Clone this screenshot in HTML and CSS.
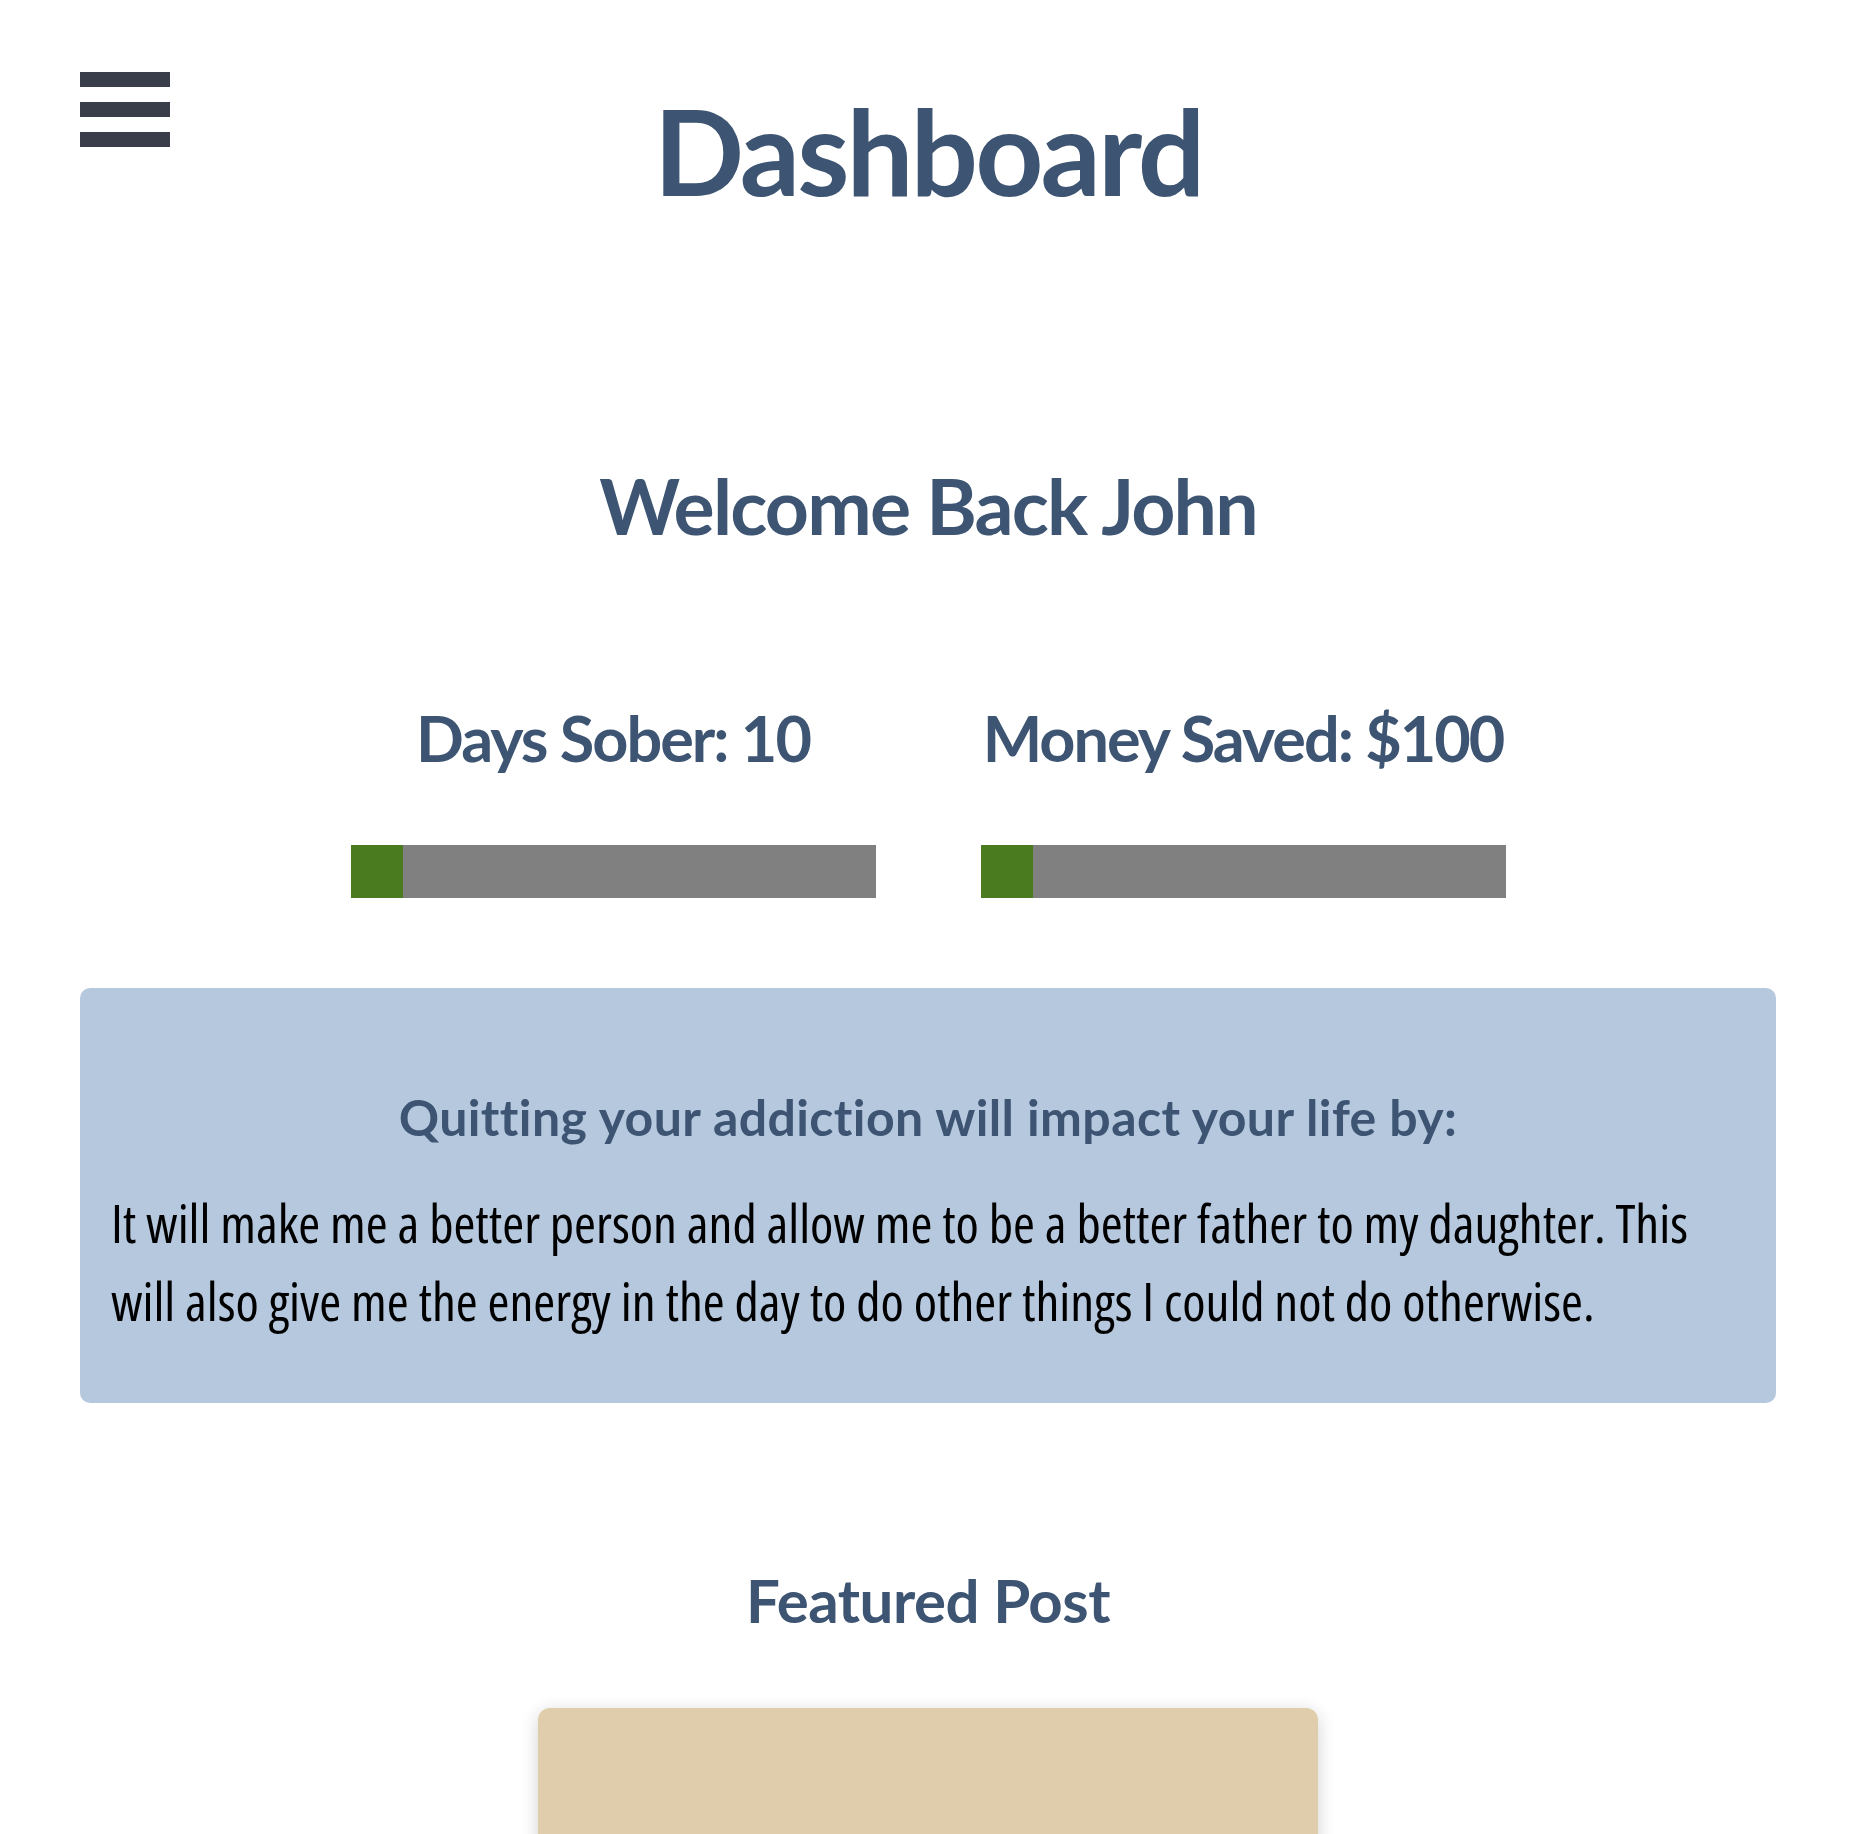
FILE: index.html
```html
<!DOCTYPE html>
<html lang="en">
<head>
<meta charset="utf-8">
<title>Dashboard</title>
<link rel="stylesheet" href="styles.css">
</head>
<body>
<div class="page">
  <header class="header">
    <button class="burger" aria-label="Menu">
      <span class="burger-bar"></span>
      <span class="burger-bar"></span>
      <span class="burger-bar"></span>
    </button>
    <h1 class="title">Dashboard</h1>
    <div class="header-spacer"></div>
  </header>

  <h2 class="welcome">Welcome Back John</h2>

  <section class="stats">
    <div class="stat">
      <h3 class="stat-label">Days Sober: 10</h3>
      <div class="progress"><div class="progress-fill" style="width:10%"></div></div>
    </div>
    <div class="stat">
      <h3 class="stat-label">Money Saved: $100</h3>
      <div class="progress"><div class="progress-fill" style="width:10%"></div></div>
    </div>
  </section>

  <section class="impact">
    <h3 class="impact-title">Quitting your addiction will impact your life by:</h3>
    <p class="impact-text">It will make me a better person and allow me to be a better father to my daughter. This will also give me the energy in the day to do other things I could not do otherwise.</p>
  </section>

  <h3 class="featured-title">Featured Post</h3>
  <div class="featured-card"></div>
</div>
</body>
</html>
```

FILE: styles.css
```css
html, body {
  margin: 0;
  padding: 0;
  background: #ffffff;
}

body {
  font-family: "Lato", "Open Sans", "Liberation Sans", sans-serif;
  color: #000000;
}

.page {
  padding: 0 74px 0 80px;
  overflow: hidden;
  height: 1834px;
  box-sizing: border-box;
}

.header {
  display: grid;
  grid-template-columns: 1fr auto 1fr;
  align-items: start;
  padding-top: 72px;
}

.burger {
  display: flex;
  flex-direction: column;
  gap: 15px;
  width: 90px;
  padding: 0;
  margin: 0;
  border: 0;
  background: transparent;
  cursor: pointer;
}

.burger-bar {
  display: block;
  width: 90px;
  height: 15px;
  background: #3a3d4a;
}

.title {
  margin: 19px 0 0;
  font-size: 119px;
  line-height: 1;
  font-weight: 700;
  color: #3d5572;
  letter-spacing: -3px;
  text-align: center;
}

.welcome {
  margin: 257px 0 0;
  font-size: 77px;
  line-height: 1;
  font-weight: 700;
  color: #3d5572;
  text-align: center;
  letter-spacing: -1.8px;
}

.stats {
  display: flex;
  justify-content: center;
  gap: 105px;
  margin-top: 162px;
}

.stat {
  width: 525px;
  display: flex;
  flex-direction: column;
  align-items: center;
}

.stat-label {
  margin: 0;
  font-size: 63px;
  line-height: 1;
  font-weight: 700;
  color: #3d5572;
  white-space: nowrap;
  letter-spacing: -2px;
}

.progress {
  margin-top: 76px;
  width: 525px;
  height: 53px;
  background: #808080;
}

.progress-fill {
  height: 100%;
  background: #4a7c1f;
}

.impact {
  margin-top: 90px;
  background: #b6c8de;
  border-radius: 10px;
  padding: 104px 31px 63px;
}

.impact-title {
  margin: 0;
  font-size: 50px;
  line-height: 1;
  font-weight: 700;
  color: #3d5572;
  text-align: center;
  letter-spacing: 0.4px;
}

.impact-text {
  margin: 42px 0 0;
  font-family: "Open Sans", "Liberation Sans Narrow", sans-serif;
  font-stretch: 75%;
  font-size: 53px;
  line-height: 78px;
  font-weight: 400;
  color: #000000;
}

.featured-title {
  margin: 167px 0 0;
  font-size: 60px;
  line-height: 1;
  font-weight: 700;
  color: #3d5572;
  text-align: center;
  letter-spacing: -0.5px;
}

.featured-card {
  margin: 78px auto 0;
  width: 780px;
  height: 420px;
  background: #dfcdac;
  border-radius: 12px;
  box-shadow: 0 4px 18px rgba(0, 0, 0, 0.18);
}
```
